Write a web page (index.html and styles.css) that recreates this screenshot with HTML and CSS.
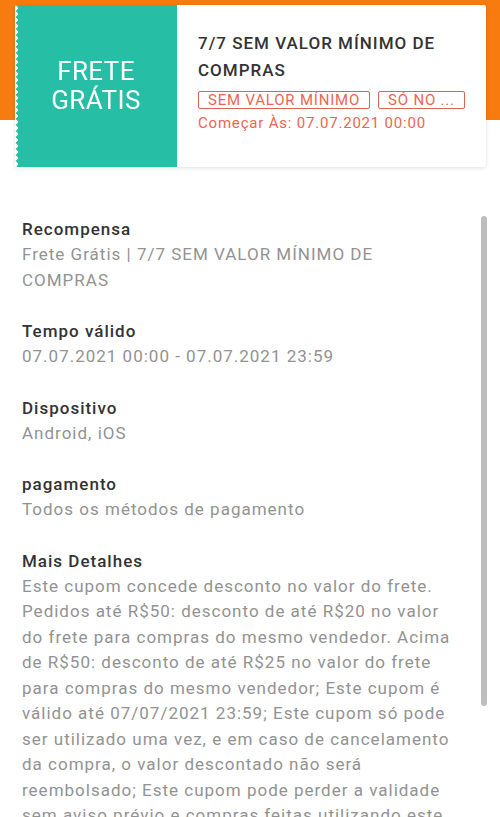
FILE: index.html
```html
<!DOCTYPE html>
<html>
	<head>
		<title>Cupom</title>
		<link rel="stylesheet" href="styles.css">
	</head>
	<body>
		<div class="header">
			<div class="voucher">
				<div class="voucher-left">FRETE<br>GRÁTIS</div>
				<div class="voucher-right">
					<div class="voucher-title">7/7 SEM VALOR MÍNIMO DE COMPRAS</div>
					<div class="tags">
						<span class="tag">SEM VALOR MÍNIMO</span>
						<span class="tag">SÓ NO ...</span>
					</div>
					<div class="voucher-date">Começar Às: 07.07.2021 00:00</div>
				</div>
			</div>
		</div>

		<div class="details-wrap">
			<div class="details">
				<div class="section">
					<div class="section-title">Recompensa</div>
					<div class="section-text">Frete Grátis | 7/7 SEM VALOR MÍNIMO DE COMPRAS</div>
				</div>
				<div class="section">
					<div class="section-title">Tempo válido</div>
					<div class="section-text">07.07.2021 00:00 - 07.07.2021 23:59</div>
				</div>
				<div class="section">
					<div class="section-title">Dispositivo</div>
					<div class="section-text">Android, iOS</div>
				</div>
				<div class="section">
					<div class="section-title">pagamento</div>
					<div class="section-text">Todos os métodos de pagamento</div>
				</div>
				<div class="section">
					<div class="section-title">Mais Detalhes</div>
					<div class="section-text">Este cupom concede desconto no valor do frete. Pedidos até R$50: desconto de até R$20 no valor do frete para compras do mesmo vendedor. Acima de R$50: desconto de até R$25 no valor do frete para compras do mesmo vendedor; Este cupom é válido até 07/07/2021 23:59; Este cupom só pode ser utilizado uma vez, e em caso de cancelamento da compra, o valor descontado não será reembolsado; Este cupom pode perder a validade sem aviso prévio e compras feitas utilizando este cupom podem ser canceladas.</div>
				</div>
			</div>
			<div class="scrollbar">
				<div class="thumb"></div>
			</div>
		</div>
	</body>
</html>
```

FILE: styles.css
```css
html, body {
	height: 100%;
	overflow: hidden;
}
body {
	margin: 0;
	font-family: Roboto, "Liberation Sans", sans-serif;
	background: #fff;
}
.header {
	background: linear-gradient(#f77b0f 120px, #fff 120px);
	padding: 5px 14px 0 15px;
}
.voucher {
	display: flex;
	height: 162px;
	background: #fff;
	box-shadow: 0 1px 4px rgba(0, 0, 0, 0.12);
	border-radius: 2px;
}
.voucher-left {
	width: 162px;
	flex: none;
	display: flex;
	align-items: center;
	justify-content: center;
	text-align: center;
	background: #26bea4;
	color: #fff;
	font-size: 26px;
	line-height: 29px;
	letter-spacing: 0.4px;
	border-radius: 0 0 0 3px;
	-webkit-mask: radial-gradient(circle at 0 3px, transparent 2.5px, #000 3px) 0 0 / 4px 6px repeat-y,
		linear-gradient(#000, #000) 4px 0 / 100% 100% no-repeat;
}
.voucher-right {
	flex: 1;
	padding: 25px 12px 0 21px;
}
.voucher-title {
	font-size: 17px;
	font-weight: 500;
	line-height: 27px;
	letter-spacing: 1px;
	color: #333;
}
.tags {
	display: flex;
	gap: 8px;
	margin-top: 7px;
}
.tag {
	border: 1px solid #dc6452;
	border-radius: 2px;
	color: #ec6552;
	font-size: 15px;
	line-height: 16px;
	letter-spacing: 0.8px;
	padding: 0 9px;
}
.voucher-date {
	color: #ec6552;
	font-size: 15px;
	letter-spacing: 0.8px;
	margin-top: 5px;
}
.details-wrap {
	display: flex;
	padding: 49px 13px 0 22px;
}
.details {
	flex: 1;
	padding-right: 24px;
}
.section {
	margin-bottom: 25px;
}
.section-title {
	font-size: 17px;
	font-weight: 500;
	line-height: 26px;
	letter-spacing: 1px;
	color: #333;
}
.section-text {
	font-size: 17px;
	line-height: 25.5px;
	letter-spacing: 1px;
	color: #929292;
}
.scrollbar {
	width: 6px;
	flex: none;
}
.thumb {
	height: 490px;
	border-radius: 3px;
	background: #bdbdbd;
}
```
